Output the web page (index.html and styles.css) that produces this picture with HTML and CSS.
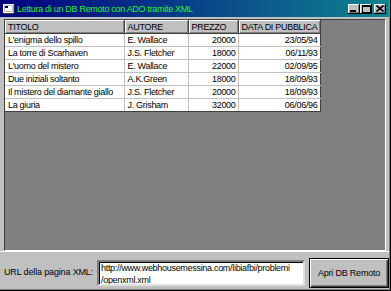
FILE: index.html
```html
<!DOCTYPE html>
<html lang="it">
<head>
    <meta charset="UTF-8">
    <title>Lettura di un DB Remoto con ADO tramite XML</title>
    <link rel="stylesheet" href="styles.css">
</head>
<body>
    <div class="window">
        <div class="titlebar">
            <svg class="app-icon" width="12" height="11" viewBox="0 0 12 11">
                <rect x="0.5" y="1.5" width="10" height="8" fill="#c0c0c0" stroke="#fff"/>
                <rect x="2" y="3" width="7" height="5" fill="#fff"/>
                <rect x="2" y="3" width="3" height="2" fill="#000080"/>
                <path d="M1 10.5 H11 V2" stroke="#404040" fill="none"/>
            </svg>
            <span class="title">Lettura di un DB Remoto con ADO tramite XML</span>
            <div class="caption-buttons">
                <span class="cap-btn"><svg width="6" height="2"><rect width="6" height="2" fill="#000"/></svg></span>
                <span class="cap-btn"><svg width="9" height="8"><rect x="0.5" y="0.5" width="8" height="7" fill="none" stroke="#000"/><rect x="0" y="0" width="9" height="2" fill="#000"/></svg></span>
                <span class="cap-btn close"><svg width="8" height="7"><path d="M0.5 0.5 L7.5 6.5 M7.5 0.5 L0.5 6.5" stroke="#000" stroke-width="1.6"/></svg></span>
            </div>
        </div>

        <div class="grid-frame">
            <table class="grid">
                <colgroup>
                    <col class="c-titolo">
                    <col class="c-autore">
                    <col class="c-prezzo">
                    <col class="c-data">
                </colgroup>
                <thead>
                    <tr>
                        <th>TITOLO</th>
                        <th>AUTORE</th>
                        <th>PREZZO</th>
                        <th>DATA DI PUBBLICA</th>
                    </tr>
                </thead>
                <tbody id="rows"></tbody>
            </table>
        </div>

        <div class="bottom">
            <label class="url-label" for="url">URL della pagina XML:</label>
            <div class="url-box" id="url">http://www.webhousemessina.com/libiafbi/problemi<br>/openxml.xml</div>
            <button class="open-btn">Apri DB Remoto</button>
        </div>
    </div>

    <script>
        const libri = [
            ["L'enigma dello spillo", "E. Wallace", "20000", "23/05/94"],
            ["La torre di Scarhaven", "J.S. Fletcher", "18000", "06/11/93"],
            ["L'uomo del mistero", "E. Wallace", "22000", "02/09/95"],
            ["Due iniziali soltanto", "A.K.Green", "18000", "18/09/93"],
            ["Il mistero del diamante giallo", "J.S. Fletcher", "20000", "18/09/93"],
            ["La giuria", "J. Grisham", "32000", "06/06/96"]
        ];

        const rows = document.getElementById("rows");
        libri.forEach(libro => {
            const tr = document.createElement("tr");
            tr.innerHTML = `
                <td>${libro[0]}</td>
                <td>${libro[1]}</td>
                <td class="num">${libro[2]}</td>
                <td class="num">${libro[3]}</td>
            `;
            rows.appendChild(tr);
        });
    </script>
</body>
</html>
```

FILE: styles.css
```css
/* Finestra stile Windows 9x */
body {
    margin: 0;
    padding: 0;
    background-color: #c0c0c0;
    font-family: "Liberation Sans", Arial, sans-serif;
    font-size: 9px;
    color: #000;
}

.window {
    width: 391px;
    height: 291px;
    box-sizing: border-box;
    display: flex;
    flex-direction: column;
    background-color: #c0c0c0;
    padding: 0 2px 2px 0;
    box-shadow: inset -1px -1px #000, inset -2px -2px #808080;
    overflow: hidden;
}

.titlebar {
    height: 17px;
    flex: none;
    display: flex;
    align-items: center;
    background: linear-gradient(to right, #000080, #108490);
    padding: 0 3px 0 3px;
}

.app-icon {
    flex: none;
    margin-right: 2px;
}

.title {
    color: #2cf02c;
    font-size: 9px;
    white-space: nowrap;
    letter-spacing: -0.3px;
}

.caption-buttons {
    margin-left: auto;
    display: flex;
    align-items: center;
}

.cap-btn {
    width: 12px;
    height: 10px;
    display: flex;
    align-items: center;
    justify-content: center;
    background-color: #c0c0c0;
    box-shadow: inset -1px -1px #000, inset 1px 1px #fff, inset -2px -2px #808080;
}

.cap-btn:first-child svg {
    margin-top: 4px;
    margin-right: 2px;
}

.cap-btn.close {
    margin-left: 2px;
}

/* Griglia dati */
.grid-frame {
    height: 230px;
    flex: none;
    margin: 2px 3px 0 4px;
    background-color: #808080;
    border: 1px solid;
    border-color: #404040 #fff #fff #404040;
    overflow: hidden;
}

.grid {
    border-collapse: collapse;
    table-layout: fixed;
    width: 315px;
    background-color: #fff;
    letter-spacing: -0.3px;
}

.c-titolo { width: 119px; }
.c-autore { width: 64px; }
.c-prezzo { width: 50px; }
.c-data { width: 82px; }

.grid th,
.grid td {
    height: 12px;
    padding: 0 2px 0 3px;
    white-space: nowrap;
    overflow: hidden;
    text-align: left;
    font-weight: normal;
    line-height: 12px;
}

.grid th {
    background-color: #c0c0c0;
    border-right: 1px solid #404040;
    border-bottom: 1px solid #404040;
    box-shadow: inset 1px 1px #fff, inset -1px -1px #808080;
    padding-top: 1px;
}

.grid td {
    border-right: 1px solid #c0c0c0;
    border-bottom: 1px solid #c0c0c0;
}

.grid td:last-child {
    border-right-color: #404040;
}

.grid tbody tr:last-child td {
    border-bottom: 1px solid #404040;
}

.grid .num {
    text-align: right;
    padding-right: 2px;
}

/* Barra inferiore */
.bottom {
    flex: 1;
    display: flex;
    align-items: center;
    padding: 0 0 0 4px;
    border-top: 1px solid #fff;
}

.url-label {
    width: 93px;
    flex: none;
    letter-spacing: -0.15px;
    margin-top: 3px;
}

.url-box {
    width: 202px;
    height: 22px;
    flex: none;
    box-sizing: content-box;
    background-color: #fff;
    border: 2px solid;
    border-color: #808080 #dfdfdf #dfdfdf #808080;
    box-shadow: inset 1px 1px #000;
    padding: 0 0 0 2px;
    font-size: 9px;
    line-height: 12px;
    letter-spacing: -0.3px;
    overflow: hidden;
    white-space: nowrap;
    margin-top: 5px;
}

.open-btn {
    width: 80px;
    height: 30px;
    margin-left: 4px;
    margin-top: 4px;
    flex: none;
    font-family: "Liberation Sans", Arial, sans-serif;
    font-size: 9px;
    letter-spacing: -0.2px;
    color: #000;
    background-color: #c0c0c0;
    border: 1px solid #000;
    box-shadow: inset 1px 1px #fff, inset -1px -1px #404040, inset -2px -2px #808080;
    padding: 0;
}
```
